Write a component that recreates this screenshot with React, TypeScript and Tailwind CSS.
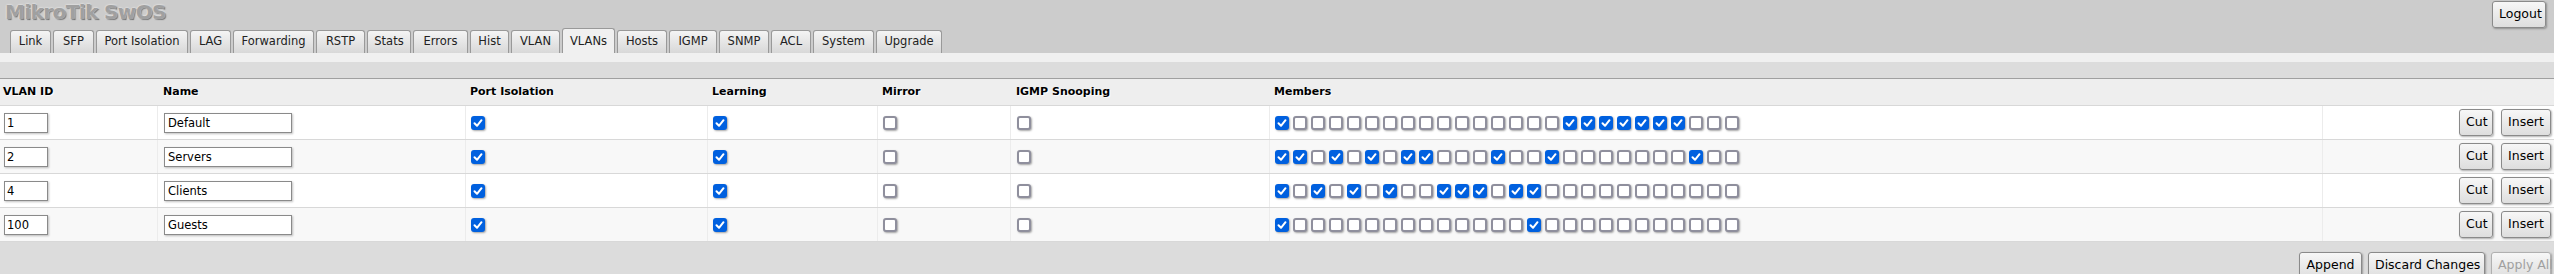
import React from "react"

const tabs: [string, number][] = [
  ["Link", 41],
  ["SFP", 41],
  ["Port Isolation", 92],
  ["LAG", 41],
  ["Forwarding", 81],
  ["RSTP", 49],
  ["Stats", 44],
  ["Errors", 55],
  ["Hist", 39],
  ["VLAN", 49],
  ["VLANs", 53],
  ["Hosts", 50],
  ["IGMP", 48],
  ["SNMP", 50],
  ["ACL", 40],
  ["System", 61],
  ["Upgrade", 66],
]

const bits = (s: string) => s.split("").map((c) => c === "1")

const vlans = [
  { id: "1", name: "Default", members: bits("10000000000000001111111000") },
  { id: "2", name: "Servers", members: bits("11010101100010010000000100") },
  { id: "4", name: "Clients", members: bits("10101010011101100000000000") },
  { id: "100", name: "Guests", members: bits("10000000000000100000000000") },
]

const cols = "grid grid-cols-[157px_308px_242px_170px_133px_259px_1053px_1fr]"

function Check({ on }: { on: boolean }) {
  if (on) {
    return (
      <span className="inline-flex w-[14px] h-[14px] rounded-[3px] bg-[#0060df] shadow-[1px_1px_2px_rgba(0,0,0,0.35)] items-center justify-center shrink-0">
        <svg width="14" height="14" viewBox="0 0 14 14">
          <path d="M3.5 7.3 L6 9.8 L10.5 4.2" stroke="#fff" strokeWidth="2" fill="none" strokeLinecap="round" strokeLinejoin="round" />
        </svg>
      </span>
    )
  }
  return (
    <span className="inline-block w-[14px] h-[14px] rounded-[3px] bg-white border-2 border-[#8f8f9d] shadow-[1px_1px_2px_rgba(0,0,0,0.35)] shrink-0" />
  )
}

function Btn({ children, disabled, className = "" }: { children: React.ReactNode; disabled?: boolean; className?: string }) {
  return (
    <button
      className={
        "h-[27px] px-[6px] rounded-[3px] border bg-gradient-to-b from-[#f7f7f7] to-[#dedede] shadow-[1px_1px_2px_rgba(0,0,0,0.3)] text-[12.5px] leading-none whitespace-nowrap shrink-0 " +
        (disabled ? "text-[#a0a0a0] border-[#b0b0b0] " : "text-black border-[#8a8a8a] ") +
        className
      }
    >
      {children}
    </button>
  )
}

export default function App() {
  return (
    <div className="w-full h-[274px] bg-[#dcdcdc] font-['DejaVu_Sans',Verdana,sans-serif] text-black overflow-hidden">
      {/* Header */}
      <header className="h-[53px] bg-[#cccccc] flex justify-between">
        <div className="flex flex-col">
          <div className="h-[28px] pl-[5px] pt-[1px] text-[20px] font-bold leading-[22px] text-[#a0a0a0] [text-shadow:0_0_2px_#fff,1px_1px_1px_#555] tracking-[-0.6px]">
            MikroTik SwOS
          </div>
          <nav className="flex items-end gap-[2px] ml-[10px] h-[25px]">
            {tabs.map(([t, w]) =>
              t === "VLANs" ? (
                <div
                  key={t}
                  style={{ width: w }}
                  className="h-[25px] bg-[#f0f0f0] border border-b-0 border-[#999] rounded-t-[3px] flex items-center justify-center text-[11.5px] text-[#222] pt-[1px]"
                >
                  {t}
                </div>
              ) : (
                <div
                  key={t}
                  style={{ width: w }}
                  className="h-[23px] bg-gradient-to-b from-[#f4f4f4] to-[#d8d8d8] border border-b-0 border-[#999] rounded-t-[3px] flex items-center justify-center text-[11.5px] text-[#222]"
                >
                  {t}
                </div>
              )
            )}
          </nav>
        </div>
        <div className="pt-[1px] pr-[8px]">
          <Btn className="h-[25px] w-[54px] px-0">Logout</Btn>
        </div>
      </header>

      {/* Content */}
      <div className="bg-[#f0f0f0] pt-[9px]">
        <div className="bg-[#dcdcdc] pt-[16px]">
          <div className="border-t border-[#a0a0a0]">
            <div className={cols + " h-[27px] bg-[#eeeeee] border-b border-[#d8d8d8] text-[11px] font-bold items-center [text-shadow:1px_1px_1px_#fff]"}>
              <div className="pl-[3px]">VLAN ID</div>
              <div className="pl-[6px]">Name</div>
              <div className="pl-[5px]">Port Isolation</div>
              <div className="pl-[5px]">Learning</div>
              <div className="pl-[5px]">Mirror</div>
              <div className="pl-[6px]">IGMP Snooping</div>
              <div className="pl-[5px]">Members</div>
              <div />
            </div>
            {vlans.map((v, i) => (
              <div
                key={v.id}
                className={cols + " h-[34px] border-b border-[#d8d8d8] items-stretch " + (i % 2 ? "bg-[#f8f8f8]" : "bg-white")}
              >
                <div className="flex items-center pl-[4px]">
                  <input
                    readOnly
                    value={v.id}
                    className="w-[44px] h-[20px] border border-[#8a8a8a] bg-white px-[2px] text-[11.5px] shadow-[1px_1px_2px_rgba(0,0,0,0.25)] outline-none"
                  />
                </div>
                <div className="flex items-center pl-[6px] border-l border-[#ececec]">
                  <input
                    readOnly
                    value={v.name}
                    className="w-[128px] h-[20px] border border-[#8a8a8a] bg-white px-[3px] text-[11.5px] shadow-[1px_1px_2px_rgba(0,0,0,0.25)] outline-none"
                  />
                </div>
                <div className="flex items-center pl-[5px] border-l border-[#ececec]">
                  <Check on />
                </div>
                <div className="flex items-center pl-[5px] border-l border-[#ececec]">
                  <Check on />
                </div>
                <div className="flex items-center pl-[5px] border-l border-[#ececec]">
                  <Check on={false} />
                </div>
                <div className="flex items-center pl-[6px] border-l border-[#ececec]">
                  <Check on={false} />
                </div>
                <div className="flex items-center gap-[4px] pl-[5px] border-l border-[#ececec]">
                  {v.members.map((m, j) => (
                    <Check key={j} on={m} />
                  ))}
                </div>
                <div className="flex items-center justify-end gap-[8px] pr-[3px] border-l border-[#ececec]">
                  <Btn className="w-[34px] px-0">Cut</Btn>
                  <Btn className="w-[50px] px-0">Insert</Btn>
                </div>
              </div>
            ))}
          </div>
          <div className="flex justify-end gap-[6px] pt-[10px] pr-[3px]">
            <Btn className="w-[63px] px-0">Append</Btn>
            <Btn className="w-[117px] px-0">Discard Changes</Btn>
            <Btn disabled className="w-[60px] px-0">
              Apply All
            </Btn>
          </div>
        </div>
      </div>
    </div>
  )
}
